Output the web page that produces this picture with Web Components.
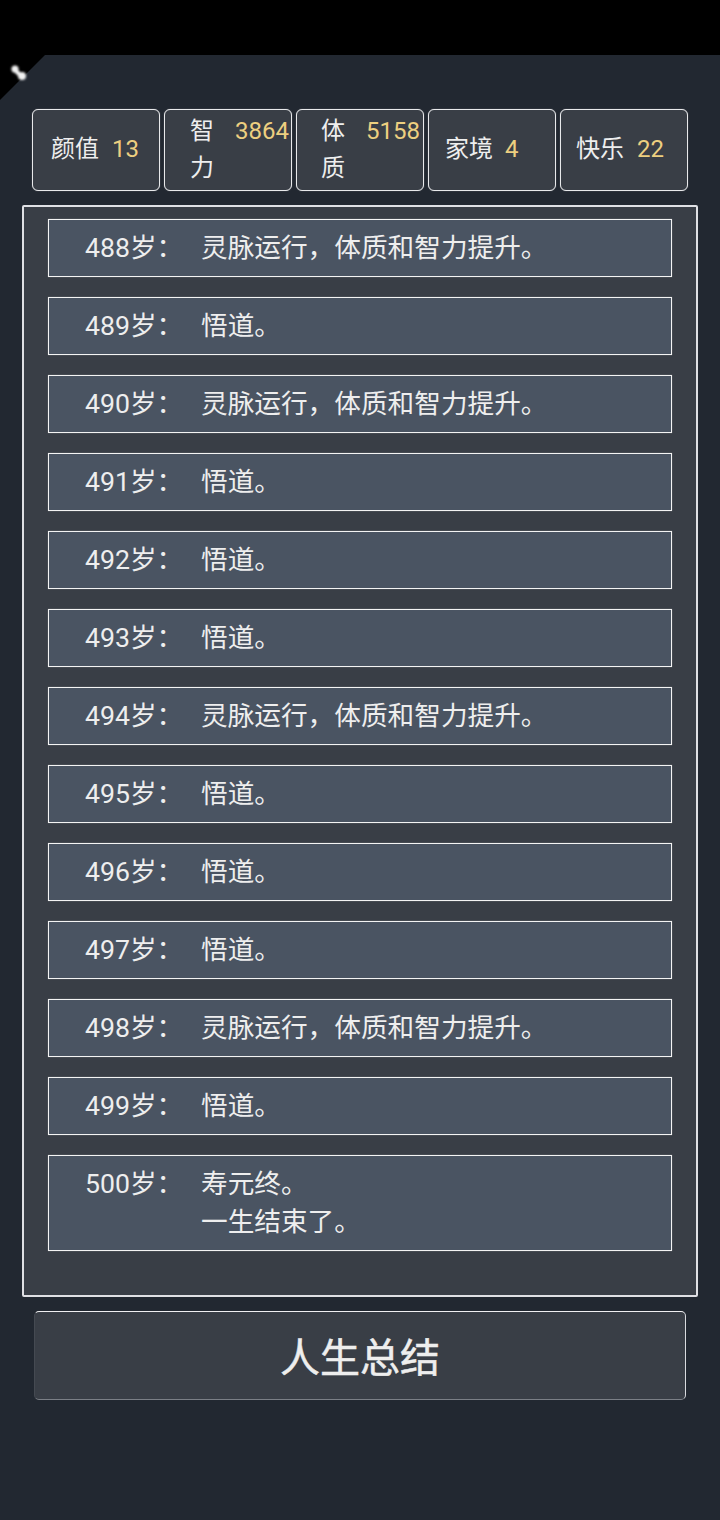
<!DOCTYPE html>
<html lang="zh-CN">
<head>
<meta charset="utf-8">
<title>人生总结</title>
<style>
  html, body {
    margin: 0;
    height: 1520px;
    overflow: hidden;
    background: #222831;
    color: #eeeeee;
    font-family: Roboto, "Noto Sans CJK SC", sans-serif;
  }
  main {
    display: flex;
    flex-direction: column;
    align-items: center;
  }
</style>
</head>
<body>
<top-bar></top-bar>
<main>
  <stat-list>
    <life-stat label="颜值" value="13" style="--pad: 18px"></life-stat>
    <life-stat label="智力" value="3864" stacked style="--pad: 25px"></life-stat>
    <life-stat label="体质" value="5158" stacked style="--pad: 24px"></life-stat>
    <life-stat label="家境" value="4" style="--pad: 16px; --gap: 12px"></life-stat>
    <life-stat label="快乐" value="22" style="--pad: 15px"></life-stat>
  </stat-list>
  <life-log>
    <life-row age="488">灵脉运行，体质和智力提升。</life-row>
    <life-row age="489">悟道。</life-row>
    <life-row age="490">灵脉运行，体质和智力提升。</life-row>
    <life-row age="491">悟道。</life-row>
    <life-row age="492">悟道。</life-row>
    <life-row age="493">悟道。</life-row>
    <life-row age="494">灵脉运行，体质和智力提升。</life-row>
    <life-row age="495">悟道。</life-row>
    <life-row age="496">悟道。</life-row>
    <life-row age="497">悟道。</life-row>
    <life-row age="498">灵脉运行，体质和智力提升。</life-row>
    <life-row age="499">悟道。</life-row>
    <life-row age="500">寿元终。<br>一生结束了。</life-row>
  </life-log>
  <summary-button>人生总结</summary-button>
</main>

<script>
class TopBar extends HTMLElement {
  constructor() {
    super();
    this.attachShadow({ mode: 'open' });
    this.shadowRoot.innerHTML = `
      <style>
        :host {
          display: block;
          height: 55px;
          background: #000;
          position: relative;
        }
        svg {
          position: absolute;
          left: 0;
          top: 55px;
        }
      </style>
      <svg width="46" height="46" viewBox="0 0 46 46">
        <defs>
          <filter id="soft" x="-30%" y="-30%" width="160%" height="160%">
            <feGaussianBlur stdDeviation="0.8"></feGaussianBlur>
          </filter>
        </defs>
        <path d="M0 0H45L0 45Z" fill="#000"></path>
        <g fill="#f2f2f2" filter="url(#soft)">
          <circle cx="15" cy="14" r="3.6"></circle>
          <circle cx="22" cy="21" r="4"></circle>
          <path d="M15 12L22 19L20 23L13 16Z"></path>
        </g>
      </svg>
    `;
  }
}

class StatList extends HTMLElement {
  constructor() {
    super();
    this.attachShadow({ mode: 'open' });
    this.shadowRoot.innerHTML = `
      <style>
        :host {
          display: flex;
          justify-content: space-between;
          width: 656px;
          margin-top: 54px;
        }
      </style>
      <slot></slot>
    `;
  }
}

class LifeStat extends HTMLElement {
  constructor() {
    super();
    this.attachShadow({ mode: 'open' });
    this.shadowRoot.innerHTML = `
      <style>
        :host {
          display: flex;
          align-items: center;
          flex: none;
          box-sizing: border-box;
          width: 128px;
          height: 82px;
          padding-left: var(--pad, 16px);
          padding-bottom: 1px;
          border: 1px solid #e8e9eb;
          border-radius: 6px;
          box-shadow: 0 0 1px rgba(238, 238, 238, 0.55);
          background: #393e46;
          font-size: 24px;
          line-height: 37px;
          white-space: nowrap;
        }
        .value {
          margin-left: var(--gap, 13px);
          color: #edcf80;
        }
        :host([stacked]) {
          align-items: flex-start;
          padding-top: 3px;
          padding-bottom: 0;
        }
        :host([stacked]) .label {
          width: 24px;
          white-space: normal;
        }
        :host([stacked]) .value {
          margin-left: 21px;
        }
      </style>
      <span class="label"></span><span class="value"></span>
    `;
  }

  connectedCallback() {
    this.shadowRoot.querySelector('.label').textContent = this.getAttribute('label');
    this.shadowRoot.querySelector('.value').textContent = this.getAttribute('value');
  }
}

class LifeLog extends HTMLElement {
  constructor() {
    super();
    this.attachShadow({ mode: 'open' });
    this.shadowRoot.innerHTML = `
      <style>
        :host {
          display: flex;
          flex-direction: column;
          gap: 20px;
          box-sizing: border-box;
          width: 676px;
          margin-top: 14px;
          padding: 12px 24px 44px;
          border: 2px solid #dfe0e4;
          border-radius: 2px;
          background: #393e46;
        }
      </style>
      <slot></slot>
    `;
  }
}

class LifeRow extends HTMLElement {
  constructor() {
    super();
    this.attachShadow({ mode: 'open' });
    this.shadowRoot.innerHTML = `
      <style>
        :host {
          display: grid;
          grid-template-columns: 116px 1fr;
          box-sizing: border-box;
          padding: 9px 0 9px 36px;
          border: 1px solid #f4f4f4;
          box-shadow: 0 0 1px rgba(244, 244, 244, 0.45);
          background: #4a5462;
          font-size: 26.67px;
          line-height: 38px;
        }
      </style>
      <span class="age"></span>
      <div><slot></slot></div>
    `;
  }

  connectedCallback() {
    this.shadowRoot.querySelector('.age').textContent = this.getAttribute('age') + '岁：';
  }
}

class SummaryButton extends HTMLElement {
  constructor() {
    super();
    this.attachShadow({ mode: 'open' });
    this.shadowRoot.innerHTML = `
      <style>
        :host {
          display: flex;
          align-items: center;
          justify-content: center;
          box-sizing: border-box;
          width: 652px;
          height: 89px;
          margin-top: 14px;
          padding-bottom: 2px;
          border-style: solid;
          border-width: 1px;
          border-color: #f0f0f2 #d8dade #7b7f86 #454a52;
          border-radius: 5px;
          background: #393e46;
          font-size: 40px;
          font-weight: 400;
          -webkit-text-stroke: 0.5px #eeeeee;
          cursor: pointer;
        }
      </style>
      <slot></slot>
    `;
  }
}

customElements.define('top-bar', TopBar);
customElements.define('stat-list', StatList);
customElements.define('life-stat', LifeStat);
customElements.define('life-log', LifeLog);
customElements.define('life-row', LifeRow);
customElements.define('summary-button', SummaryButton);
</script>
</body>
</html>
